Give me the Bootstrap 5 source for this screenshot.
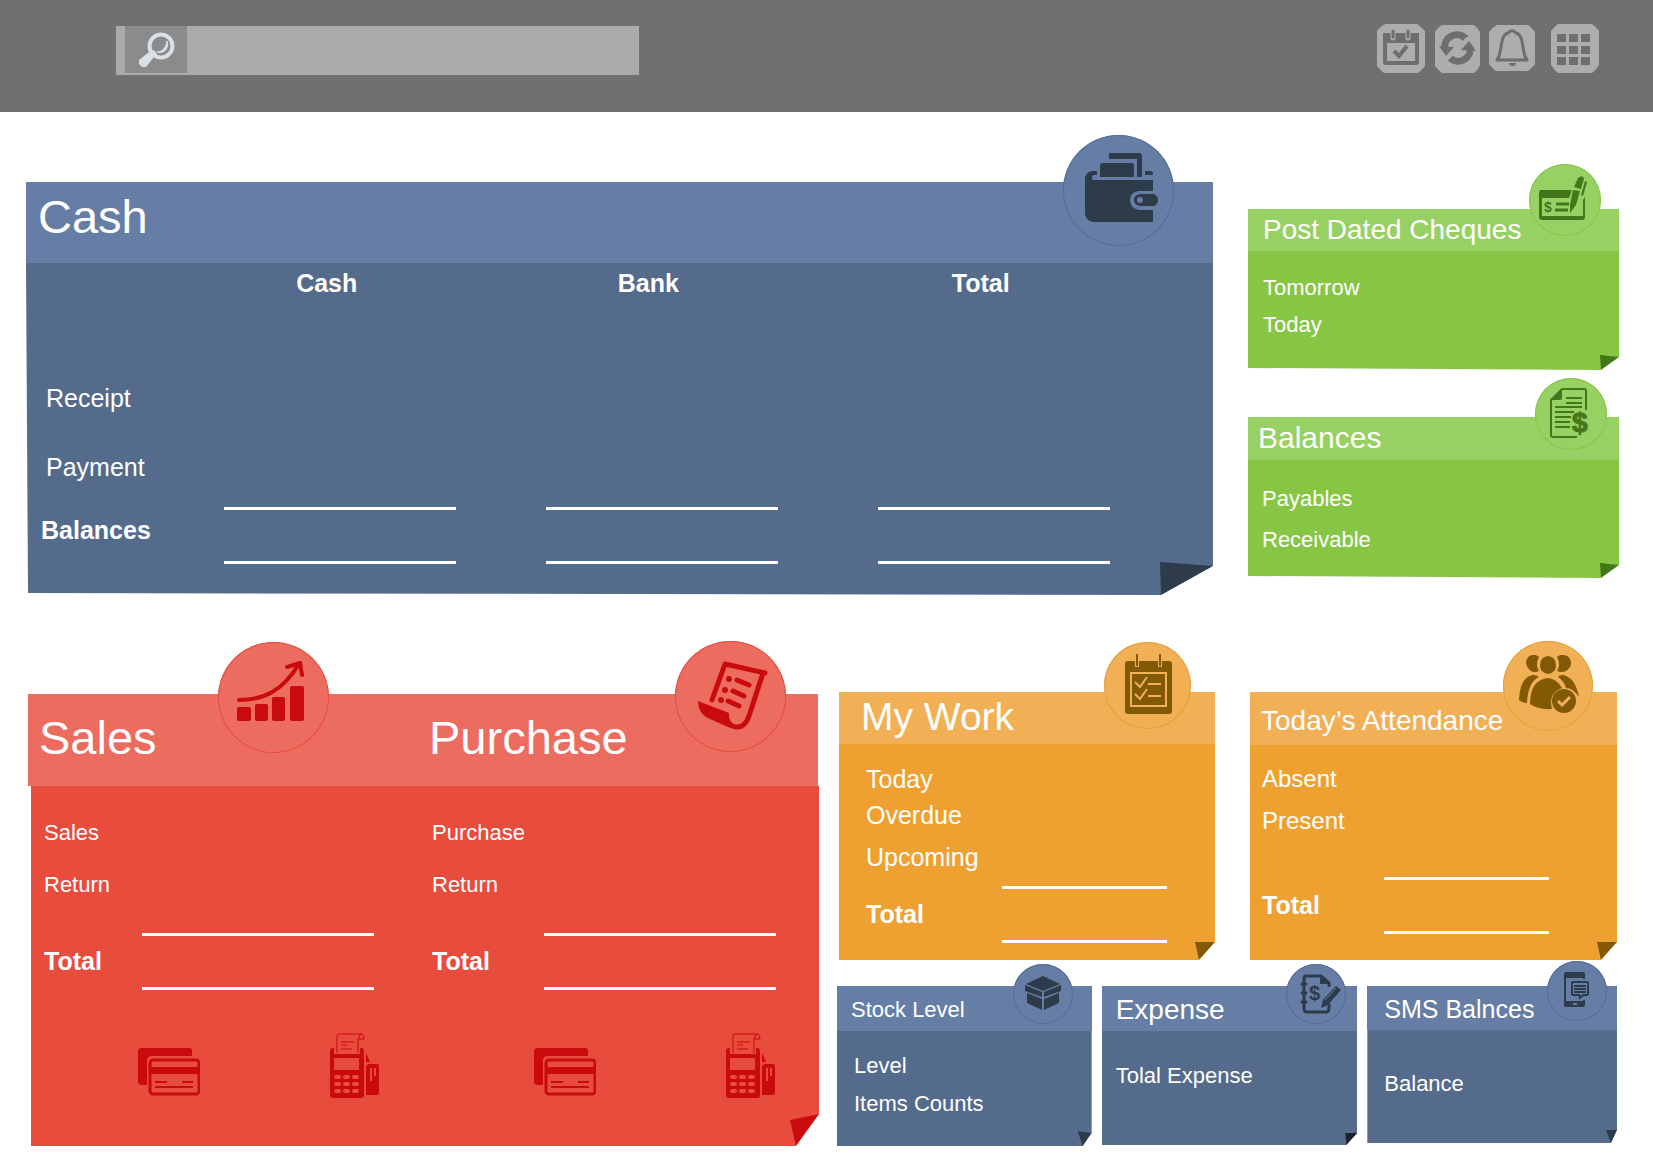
<!DOCTYPE html>
<html lang="en">
<head>
<meta charset="utf-8">
<meta name="viewport" content="width=device-width, initial-scale=1">
<title>Dashboard</title>
<link href="https://cdn.jsdelivr.net/npm/bootstrap@5.3.0/dist/css/bootstrap.min.css" rel="stylesheet">
<style>
  body { font-family: "Liberation Sans", Arial, sans-serif; background: #fff; color: #fff; font-size: 22px; }

  /* top bar */
  .topbar { background: #707070; min-height: 112px; padding: 24px 54px 0 116px; }
  .search { width: 523px; height: 49px; margin-top: 2px; padding-left: 9px; background: #ababab; }
  .search button { width: 62px; height: 47px; background: #8b8b8b; }
  .search input { background: transparent; }
  .tool-btn { line-height: 0; }
  .tool-gap { margin-left: 8px; }

  /* palettes */
  .tone-blue   { --head: #667ea5; --face: #546b8c; --ink: #2d3b4a; --ring: #566d94; }
  .tone-green  { --head: #98d163; --face: #86c644; --ink: #44761b; --ring: #86c644; }
  .tone-red    { --head: #ec6c5f; --face: #e84c3d; --ink: #c90b0d; --ring: #e84c3d; }
  .tone-orange { --head: #f2b056; --face: #eea130; --ink: #825a06; --ring: #e5a03a; }

  /* paper note panels */
  .note { display: flex; flex-direction: column; }
  .note-head { position: relative; display: flex; align-items: center; background: var(--head); height: var(--hh); }
  .note-head h2 { margin: 0; font-size: 28px; line-height: 32px; font-weight: 400; white-space: nowrap; }
  .note-body {
    position: relative; flex: 1 1 auto; background: var(--face);
    clip-path: polygon(0 0, 100% 0, 100% calc(100% - var(--fh) + var(--fr)), calc(100% - var(--fw) + var(--fb)) 100%, var(--lean, 0px) calc(100% - var(--skew, 0px)));
  }
  .note-body::after {
    content: ""; position: absolute; right: 0; bottom: 0; width: var(--fw); height: var(--fh); background: var(--ink);
    clip-path: polygon(0 var(--fl), 100% var(--fr), var(--fb) 100%);
  }
  .fold-lg  { --fw: 53px; --fh: 33px; --fl: 0px; --fr: 4px; --fb: 1px; --lean: 2px; --skew: 2px; }
  .fold-sm  { --fw: 19px; --fh: 15px; --fl: 0px; --fr: 2px; --fb: 1px; --skew: 2px; }
  .fold-red { --fw: 29px; --fh: 32px; --fl: 6px; --fr: 0px; --fb: 6px; }
  .fold-org { --fw: 20px; --fh: 18px; --fl: 0px; --fr: 0px; --fb: 4px; }
  .fold-stk { --fw: 14px; --fh: 15px; --fl: 0px; --fr: 2px; --fb: 5px; }
  .fold-exp { --fw: 12px; --fh: 12px; --fl: 0px; --fr: 0px; --fb: 1px; --ink: #1c232e; }
  .fold-sms { --fw: 11px; --fh: 13px; --fl: 0px; --fr: 0px; --fb: 5px; }

  /* round icon that hangs over the header */
  .disc { position: absolute; z-index: 1; width: var(--d); height: var(--d); top: var(--t); right: var(--r);
    border-radius: 50%; background: var(--head); box-shadow: inset 0 0 0 1px var(--ring); color: var(--ink); line-height: 0; }
  .disc svg, .pay svg { display: block; fill: currentColor; }
  .ln { fill: none; stroke: currentColor; }
  .disc .hl { fill: var(--head); }
  .hs { fill: none; stroke: var(--head); }

  .lines { list-style: none; margin: 0; padding: 0; }
  .lines li { display: flex; align-items: center; height: var(--row); }
  .t25, .t25 li { font-size: 25px; }
  .t24 { font-size: 24px; }
  .sum { display: flex; align-items: center; justify-content: space-between; height: 57px; font-size: 25px; font-weight: 700; }
  .ruled { height: 57px; border-top: 3px solid #fff; border-bottom: 3px solid #fff; }
  .ruled-md { width: 165px; }
  .ruled-lg { width: 232px; }

  /* page areas */
  main { padding: 70px 36px 23px 28px; }
  .area-top { display: grid; gap: 35px; margin: 0 -2px; }
  .area-side { display: grid; gap: 47px; align-content: start; padding-top: 27px; }
  .area-low { display: grid; gap: 18px; margin-top: 97px; }
  .pair { display: grid; gap: 35px; padding-left: 2px; }
  .trio { display: grid; gap: 10px; margin-top: 26px; align-items: start; }
  @media (min-width: 1100px) {
    .area-top { grid-template-columns: 1187fr 371fr; }
    .area-low { grid-template-columns: 791fr 780fr; }
    .pair { grid-template-columns: 376fr 367fr; }
    .trio { grid-template-columns: 255fr 256fr 250fr; }
  }

  /* cash */
  .cash-note .note-head { --hh: 81px; padding: 0 0 11px 12px; }
  .cash-note h2, .trade-note h2 { font-size: 47px; line-height: 56px; }
  .cash-table { width: 100%; table-layout: fixed; font-size: 25px; line-height: 30px; margin-bottom: 31px; }
  .cash-table th, .cash-table td { padding: 0; }
  .cash-table thead th { height: 40px; vertical-align: middle; }
  .cash-table thead span { display: block; width: 205px; text-align: center; }
  .cash-table tbody th, .cash-table tfoot th { vertical-align: bottom; font-weight: 400; padding-left: 20px; }
  .cash-table tbody th { padding-bottom: 25px; }
  .cash-table tfoot th { padding: 0 0 19px 15px; font-weight: 700; }
  .row-receipt { height: 135px; }
  .row-payment { height: 69px; }

  /* post dated cheques, balances */
  .cheque-note .note-head { --hh: 42px; padding-left: 15px; }
  .cheque-note .note-body { height: 119px; padding: 18px 0 0 15px; --row: 37px; }
  .bal-note .note-head { --hh: 43px; padding: 0 0 2px 10px; }
  .bal-note h2 { font-size: 30px; }
  .bal-note .note-body { height: 118px; padding: 18px 0 0 14px; --row: 41px; }

  /* sales and purchase */
  .trade-note { padding-top: 2px; }
  .trade-head { display: grid; grid-template-columns: 399fr 391fr; margin-right: 1px; }
  .trade-head .note-head { --hh: 92px; padding: 0 0 5px 2px; }
  .trade-head .sales-head { padding-left: 11px; }
  .trade-note .note-body { margin-left: 3px; height: 360px; }
  .trade-cols { display: grid; grid-template-columns: 400fr 388fr; padding-top: 20px; --row: 52px; }
  .trade-cols .sum { justify-content: flex-start; margin-top: 23px; }
  .sales-col { padding-left: 13px; --label: 98px; }
  .buy-col { padding-left: 1px; --label: 112px; }
  .sum-label { width: var(--label); }
  .pay { display: grid; grid-template-columns: 396fr 285fr; padding: 43px 0 0 107px; color: var(--ink); }
  .pay div { display: flex; align-items: center; gap: 130px; }

  /* my work, attendance */
  .work-note .note-head { --hh: 52px; padding: 0 0 3px 22px; }
  .work-note h2 { font-size: 39px; line-height: 44px; }
  .work-note .note-body { padding: 18px 48px 16px 27px; --row: 36px; }
  .work-note .lines li:last-child { height: 48px; }
  .work-note .sum { margin-top: 4px; }
  .att-note .note-head { --hh: 53px; padding: 4px 0 0 11px; }
  .att-note .note-body { padding: 13px 68px 26px 12px; --row: 42px; }
  .att-note .sum { margin-top: 35px; }

  /* stock, expense, sms */
  .trio .note-head { --hh: 45px; padding: 2px 0 0 14px; }
  .trio .note-body { --row: 38px; padding-left: 17px; }
  .stock-note h2 { font-size: 22px; }
  .stock-note .note-body { height: 115px; padding-top: 15px; }
  .exp-note .note-body { height: 114px; padding-top: 25px; padding-left: 14px; }
  .sms-note h2 { font-size: 25px; }
  .trio .sms-note .note-head { --hh: 44px; padding-left: 17px; }
  .sms-note .note-body { height: 113px; padding-top: 34px; }
</style>
<script src="https://cdn.jsdelivr.net/npm/bootstrap@5.3.0/dist/js/bootstrap.bundle.min.js"></script>
</head>
<body>

<header class="topbar d-flex align-items-start justify-content-between">
  <form class="search d-flex align-items-start" role="search">
    <button type="submit" class="btn border-0 rounded-0 p-0" aria-label="Search">
      <svg width="62" height="47" viewBox="0 0 62 47" aria-hidden="true">
        <path d="M24 26l5 5-8 10h-4l-3-3v-4z" fill="#d7e1e7"/>
        <circle cx="36" cy="20" r="11.500" fill="none" stroke="#d7e1e7" stroke-width="4"/>
        <path d="M29 24l3 4-4 4-5-4z" fill="#d7e1e7"/>
        <path d="M42 15c2 7-2 13-10 11 5 0 9-4 10-11z" fill="#d7e1e7" stroke="#d7e1e7"/>
      </svg>
    </button>
    <input type="search" class="form-control border-0 rounded-0 shadow-none h-100" aria-label="Search text">
  </form>
  <nav class="d-flex align-items-start gap-2" aria-label="Tools">
    <button type="button" class="btn border-0 p-0 tool-btn" aria-label="Calendar">
      <svg width="50" height="49" viewBox="0 0 50 49">
        <path d="M8 0h32q3 2 8 7v35q-4 5-7 7H7q-4-3-7-7V7q4-5 8-7z" fill="#adadad"/>
        <path d="M6 9h36v30l-2 2H8l-2-2z" fill="#6e6e6e"/>
        <path d="M10 19h28v18H10z" fill="#adadad"/>
        <path d="M16 7v7M31 7v7" stroke="#adadad" stroke-width="5" stroke-linecap="round"/>
        <path d="M16 7v6M31 7v6" stroke="#6e6e6e" stroke-width="3" stroke-linecap="round"/>
        <path d="M17 27l5 5 8-10" fill="none" stroke="#6e6e6e" stroke-width="4"/>
      </svg>
    </button>
    <button type="button" class="btn border-0 p-0 tool-btn" aria-label="Refresh">
      <svg width="46" height="49" viewBox="0 0 46 49">
        <path d="M7 1h32q3 2 6 7v33q-3 6-6 8H7q-4-3-7-7V8q3-5 7-7z" fill="#adadad"/>
        <path d="M10 25a12 12 0 0 1 21-10" fill="none" stroke="#6e6e6e" stroke-width="7"/>
        <path d="M35 23a12 12 0 0 1-20 11" fill="none" stroke="#6e6e6e" stroke-width="7"/>
        <path d="M4 22l15 1-8 9zM41 27l-15-1 8-9z" fill="#6e6e6e"/>
        <path d="M7 31l6 4 8-9M39 18l-7-4-7 7" fill="none" stroke="#adadad" stroke-width="2"/>
      </svg>
    </button>
    <button type="button" class="btn border-0 p-0 tool-btn" aria-label="Notifications">
      <svg width="46" height="48" viewBox="0 0 46 48">
        <path d="M8 1h31q3 2 7 7v32q-4 5-7 7H7q-4-3-7-7V8q4-5 8-7z" fill="#adadad"/>
        <path d="M8 36c6-7 2-25 11-27 2-3 6-3 8 0 9 2 5 20 11 27z" fill="none" stroke="#6d6d70" stroke-width="3" stroke-linejoin="round"/>
        <path d="M20 39h7c0 4-7 4-7 0z" fill="#6d6d70"/>
      </svg>
    </button>
    <button type="button" class="btn border-0 p-0 tool-btn tool-gap" aria-label="Apps">
      <svg width="48" height="49" viewBox="0 0 48 49">
        <path d="M7 0h34q4 3 7 7v34q-3 5-7 8H7q-4-3-7-8V7q3-4 7-7z" fill="#adadad"/>
        <path d="M6 10h9v8H6zM18 10h9v8h-9zM30 10h9v8h-9zM6 22h9v8H6zM18 22h9v8h-9zM30 22h9v8h-9zM6 33h9v8H6zM18 33h9v8h-9zM30 33h9v8h-9z" fill="#6e6e6e"/>
      </svg>
    </button>
  </nav>
</header>

<main>
  <div class="area-top">
    <section class="note cash-note tone-blue">
      <div class="note-head">
        <h2>Cash</h2>
        <span class="disc" style="--d:111px;--t:-47px;--r:39px">
          <svg viewBox="0 0 111 111">
            <path d="M46 18h30q3 0 3 3v21h-5V24H46z"/>
            <path d="M39 28h30q2 0 2 2v12H37V30q0-2 2-2z"/>
            <path d="M82 36h6q2 0 2 4h-8z"/>
            <path d="M34 36v4h-3q-2 0-2 2t1 3h60v42H30q-8-2-8-9V42q2-6 8-6z"/>
            <path class="hl" d="M91 56H76q-9 1-9 9t9 10h15z"/>
            <path d="M77 59h14q4 2 4 6t-4 6H77q-6-1-6-6t6-6z"/>
            <circle class="hl" cx="77" cy="65" r="3"/>
          </svg>
        </span>
      </div>
      <div class="note-body fold-lg">
        <table class="cash-table">
          <colgroup><col style="width:16.700%"><col style="width:27.100%"><col style="width:28%"><col></colgroup>
          <thead><tr><td></td><th scope="col"><span>Cash</span></th><th scope="col"><span>Bank</span></th><th scope="col"><span>Total</span></th></tr></thead>
          <tbody>
            <tr class="row-receipt"><th scope="row">Receipt</th><td></td><td></td><td></td></tr>
            <tr class="row-payment"><th scope="row">Payment</th><td></td><td></td><td></td></tr>
          </tbody>
          <tfoot>
            <tr><th scope="row">Balances</th><td><div class="ruled ruled-lg"></div></td><td><div class="ruled ruled-lg"></div></td><td><div class="ruled ruled-lg"></div></td></tr>
          </tfoot>
        </table>
      </div>
    </section>

    <div class="area-side">
      <section class="note cheque-note tone-green">
        <div class="note-head">
          <h2>Post Dated Cheques</h2>
          <span class="disc" style="--d:72px;--t:-45px;--r:18px">
            <svg viewBox="0 0 72 72">
              <path d="M12 26h31l-3 8H13v18h41V36l2-3v20q0 3-3 3H13q-3 0-3-3V29q0-3 2-3z"/>
              <path class="ln" d="M27 40h13M26 46h13" stroke-width="3"/>
              <text x="15" y="48" font-family="Liberation Sans" font-size="14" font-weight="700">$</text>
              <path d="M49 14q5-4 6 1l-3 10-7-2zM44 26l7 1-4 14-6 8v-8zM56 17l2 1-4 14-2-1z"/>
            </svg>
          </span>
        </div>
        <div class="note-body fold-sm">
          <ul class="lines"><li>Tomorrow</li><li>Today</li></ul>
        </div>
      </section>

      <section class="note bal-note tone-green">
        <div class="note-head">
          <h2>Balances</h2>
          <span class="disc" style="--d:72px;--t:-39px;--r:12px">
            <svg viewBox="0 0 72 72">
              <path class="ln" d="M51 32V13q0-2-2-2H27L16 22v35q0 2 2 2h24" stroke-width="2"/>
              <path d="M16 22l11-11v9q0 2-2 2z"/>
              <path class="ln" d="M31 20h16M31 25h16M20 29h27M20 34h19M20 39h16M20 44h15M20 49h15" stroke-width="2"/>
              <text x="37" y="54" font-family="Liberation Sans" font-size="28" font-weight="700" stroke="currentColor">$</text>
            </svg>
          </span>
        </div>
        <div class="note-body fold-sm">
          <ul class="lines"><li>Payables</li><li>Receivable</li></ul>
        </div>
      </section>
    </div>
  </div>

  <div class="area-low">
    <section class="note trade-note tone-red">
      <div class="trade-head">
        <div class="note-head sales-head">
          <h2>Sales</h2>
          <span class="disc" style="--d:111px;--t:-52px;--r:98px">
            <svg viewBox="0 0 111 111">
              <rect x="19" y="65" width="14" height="14" rx="2"/><rect x="37" y="62" width="13" height="17" rx="2"/>
              <rect x="54" y="55" width="13" height="24" rx="2"/><rect x="72" y="44" width="14" height="35" rx="2"/>
              <path class="ln" d="M21 58c26 0 44-10 60-36M69 25l13-4 2 12" stroke-width="4" stroke-linecap="round" stroke-linejoin="round"/>
            </svg>
          </span>
        </div>
        <div class="note-head">
          <h2>Purchase</h2>
          <span class="disc" style="--d:111px;--t:-53px;--r:32px">
            <svg viewBox="0 0 111 111">
              <path class="ln" d="M37 59L50 23l40 9M88 32L74 75q-4 12-13 11" stroke-width="5" stroke-linecap="round" stroke-linejoin="round"/>
              <path d="M23 60l31 12q-1 9 7 12v4q-4 0-8-2l-18-8q-12-5-12-18z"/>
              <path class="ln" d="M62 39l12 5M58 50l11 5M53 60l11 5" stroke-width="5" stroke-linecap="round"/>
              <circle cx="54" cy="38" r="3"/><circle cx="50" cy="49" r="3"/><circle cx="46" cy="59" r="3"/>
            </svg>
          </span>
        </div>
      </div>
      <div class="note-body fold-red">
        <div class="trade-cols">
          <div class="sales-col">
            <ul class="lines"><li>Sales</li><li>Return</li></ul>
            <div class="sum"><span class="sum-label">Total</span><span class="ruled ruled-lg"></span></div>
          </div>
          <div class="buy-col">
            <ul class="lines"><li>Purchase</li><li>Return</li></ul>
            <div class="sum"><span class="sum-label">Total</span><span class="ruled ruled-lg"></span></div>
          </div>
        </div>
        <div class="pay">
          <div>
            <svg width="62" height="65" viewBox="0 -15 62 65"><use href="#cards"/></svg>
            <svg width="50" height="65" viewBox="0 0 50 65"><use href="#terminal"/></svg>
          </div>
          <div>
            <svg width="62" height="65" viewBox="0 -15 62 65"><use href="#cards"/></svg>
            <svg width="50" height="65" viewBox="0 0 50 65"><use href="#terminal"/></svg>
          </div>
        </div>
      </div>
    </section>

    <div>
      <div class="pair">
        <section class="note work-note tone-orange">
          <div class="note-head">
            <h2>My Work</h2>
            <span class="disc" style="--d:87px;--t:-50px;--r:24px">
              <svg viewBox="0 0 87 87">
                <rect x="21" y="19" width="47" height="53" rx="3"/>
                <path class="hs" d="M33 17v8M56 17v8" stroke-width="4"/>
                <path class="ln" d="M33 12v12M56 12v12" stroke-width="2"/>
                <path class="hs" d="M27 31h35v33H27zM31 40l5 5 7-10M31 52l5 5 7-10M44 42h13M44 54h13" stroke-width="2"/>
              </svg>
            </span>
          </div>
          <div class="note-body fold-org">
            <ul class="lines t25"><li>Today</li><li>Overdue</li><li>Upcoming</li></ul>
            <div class="sum"><span>Total</span><span class="ruled ruled-md"></span></div>
          </div>
        </section>

        <section class="note att-note tone-orange">
          <div class="note-head">
            <h2>Today’s Attendance</h2>
            <span class="disc" style="--d:90px;--t:-51px;--r:24px">
              <svg viewBox="0 0 90 90">
                <path d="M29 14h4l3 2q-4 8 0 14-5 2-8 0-5-4-5-9 1-6 6-7zM61 14h-4l-3 2q4 8 0 14 5 2 9 0 6-4 5-9-1-6-7-7z"/>
                <path d="M45 15q8 1 8 9t-8 9q-8-1-8-9t8-9z"/>
                <path d="M30 34q4 0 6 2-11 5-12 26-5 0-8-3 1-23 14-25zM60 34q-4 0-5 2 6 4 8 11 7 0 13 9-4-20-16-22z"/>
                <path d="M45 37q9 1 14 10-14 5-10 21-14 1-22-5 0-24 18-26z"/>
                <circle cx="61" cy="60" r="12"/><path class="hs" d="M55 60l4 4 8-8" stroke-width="3"/>
              </svg>
            </span>
          </div>
          <div class="note-body fold-org">
            <ul class="lines t24"><li>Absent</li><li>Present</li></ul>
            <div class="sum"><span>Total</span><span class="ruled ruled-md"></span></div>
          </div>
        </section>
      </div>

      <div class="trio">
        <section class="note stock-note tone-blue">
          <div class="note-head">
            <h2>Stock Level</h2>
            <span class="disc" style="--d:60px;--t:-22px;--r:19px">
              <svg viewBox="0 0 60 60">
                <path d="M30 12l17 8-17 7-17-7zM12 21l17 7v5l-17-6zM48 21l-17 7v5l17-6zM14 29l15 6v11l-15-7zM46 29l-15 6v11l15-7z"/>
              </svg>
            </span>
          </div>
          <div class="note-body fold-stk"><ul class="lines"><li>Level</li><li>Items Counts</li></ul></div>
        </section>

        <section class="note exp-note tone-blue">
          <div class="note-head">
            <h2>Expense</h2>
            <span class="disc" style="--d:60px;--t:-22px;--r:11px">
              <svg viewBox="0 0 60 60">
                <path class="ln" d="M43 23v-4l-8-7H20q-2 0-2 2v30q0 4 3 4h19q3 0 3-4v-4" stroke-width="3"/>
                <path d="M34 11l10 9h-10z"/>
                <path class="ln" d="M16 20h4M16 29h4M16 38h4" stroke-width="3" stroke-linecap="round"/>
                <text x="23" y="36" font-family="Liberation Sans" font-size="20" font-weight="700">$</text>
                <path d="M50 22l5 4-13 15-7 3 2-8z"/><path class="hs" d="M39 36l11-12" stroke-width="1"/>
              </svg>
            </span>
          </div>
          <div class="note-body fold-exp"><ul class="lines"><li>Tolal Expense</li></ul></div>
        </section>

        <section class="note sms-note tone-blue">
          <div class="note-head">
            <h2>SMS Balnces</h2>
            <span class="disc" style="--d:60px;--t:-25px;--r:10px">
              <svg viewBox="0 0 60 60">
                <path fill-rule="evenodd" d="M19 11h17q2 0 2 2v31q0 2-2 2H19q-2 0-2-2V13q0-2 2-2zM19 17v23h17V17z"/>
                <path class="hl" d="M23 18h20v21H23z"/><path class="hl" d="M26 42h4v2h-4z"/>
                <path class="ln" d="M26 21h14q1 0 1 1v11q0 1-1 1h-4l-3 3-1-3h-6q-1 0-1-1V22q0-1 1-1zM27 25h12M27 28h12M27 31h12" stroke-width="2"/>
              </svg>
            </span>
          </div>
          <div class="note-body fold-sms"><ul class="lines"><li>Balance</li></ul></div>
        </section>
      </div>
    </div>
  </div>
</main>

<!-- shared payment icons -->
<svg width="0" height="0" class="position-absolute" aria-hidden="true">
  <defs>
    <g id="cards">
      <path d="M3 0h48q3 0 3 3v5H14q-5 0-5 5v24H4q-4 0-4-4V4q0-4 3-4z"/>
      <rect x="12" y="12" width="49" height="34" rx="3" fill="none" stroke="currentColor" stroke-width="3"/>
      <path d="M11 19h50v7H11z"/>
      <path d="M17 34h12M44 34h11M17 39h38" fill="none" stroke="currentColor" stroke-width="2"/>
    </g>
    <g id="terminal">
      <path fill-rule="evenodd" d="M3 15h1v6h26v-6h1q3 0 3 3v44q0 3-3 3H3q-3 0-3-3V18q0-3 3-3zM4 25v12h25V25z"/>
      <path d="M7 20V3q0-2 2-2h23q2 1 2 5h-5V3q1-2 3-2M28 5v15M11 9h13M11 12h6M11 16h11" fill="none" stroke="currentColor" stroke-width="1"/>
      <g fill="#e84c3d">
        <rect x="4" y="42" width="7" height="4" rx="2"/><rect x="13" y="42" width="7" height="4" rx="2"/><rect x="22" y="42" width="7" height="4" rx="2"/>
        <rect x="4" y="49" width="7" height="4" rx="2"/><rect x="13" y="49" width="7" height="4" rx="2"/><rect x="22" y="49" width="7" height="4" rx="2"/>
        <rect x="4" y="56" width="7" height="4" rx="2"/><rect x="13" y="56" width="7" height="4" rx="2"/><rect x="22" y="56" width="7" height="4" rx="2"/>
      </g>
      <path d="M36 20l4 9h-4zM38 31h9q2 0 2 2v27q0 2-2 2H36V33z"/>
      <path d="M41 35v13M45 35v8" stroke="#e84c3d" stroke-width="2"/>
    </g>
  </defs>
</svg>
</body>
</html>
